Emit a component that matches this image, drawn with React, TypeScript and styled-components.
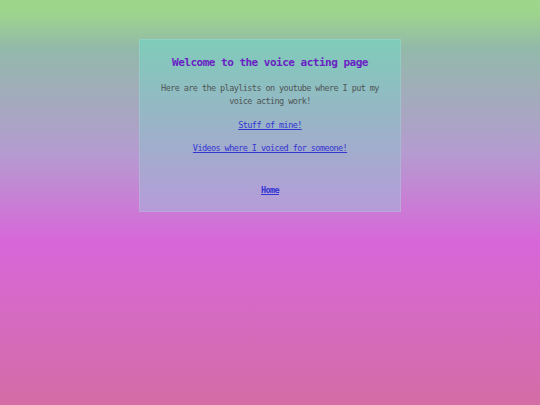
import styled, { createGlobalStyle } from "styled-components"

const GlobalStyle = createGlobalStyle`
    html, body {
        margin: 0;
        padding: 0;
    }
    body {
        font-family: "DejaVu Sans Mono", "Liberation Mono", monospace;
    }
`

const Page = styled.div`
    min-height: 100vh;
    box-sizing: border-box;
    padding-top: 39px;
    background: linear-gradient(180deg, #9ed68b 0%, #9ed58c 3%, #93b9aa 12%, #b59bd0 38%, #d866d9 60%, #d66ac4 76%, #d46ca5 100%);
`

const Card = styled.main`
    width: 262px;
    margin: 0 auto;
    box-sizing: border-box;
    padding: 17px 10px 15px;
    text-align: center;
    background: linear-gradient(180deg, #7fccb9 0%, #97b6c6 45%, #b69bd9 100%);
    box-shadow: inset 0 0 0 1px rgba(255, 255, 255, 0.12);
`

const Title = styled.h1`
    margin: 0 0 12px;
    font-size: 11px;
    line-height: 14px;
    font-weight: bold;
    letter-spacing: -0.5px;
    color: #6a22c4;
`

const Intro = styled.p`
    margin: 0 0 11px;
    font-size: 8.5px;
    line-height: 13px;
    letter-spacing: -0.58px;
    color: #4f5555;
`

const LinkRow = styled.div<{ $top?: number; $last?: boolean }>`
    margin: ${p => p.$top || 0}px 0 ${p => p.$last ? 0 : 10}px;
    font-size: 8.5px;
    line-height: 13px;
    letter-spacing: -0.58px;
`

const Link = styled.a<{ $bold?: boolean }>`
    color: #3434d2;
    text-decoration: underline;
    font-weight: ${p => p.$bold ? 'bold' : 'normal'};
`

const App = () => {
    return (
        <>
            <GlobalStyle />
            <Page>
                <Card>
                    <Title>Welcome to the voice acting page</Title>
                    <Intro>Here are the playlists on youtube where I put my voice acting work!</Intro>
                    <LinkRow><Link href="#">Stuff of mine!</Link></LinkRow>
                    <LinkRow><Link href="#">Videos where I voiced for someone!</Link></LinkRow>
                    <LinkRow $top={29} $last><Link href="#" $bold>Home</Link></LinkRow>
                </Card>
            </Page>
        </>
    )
}

export default App
